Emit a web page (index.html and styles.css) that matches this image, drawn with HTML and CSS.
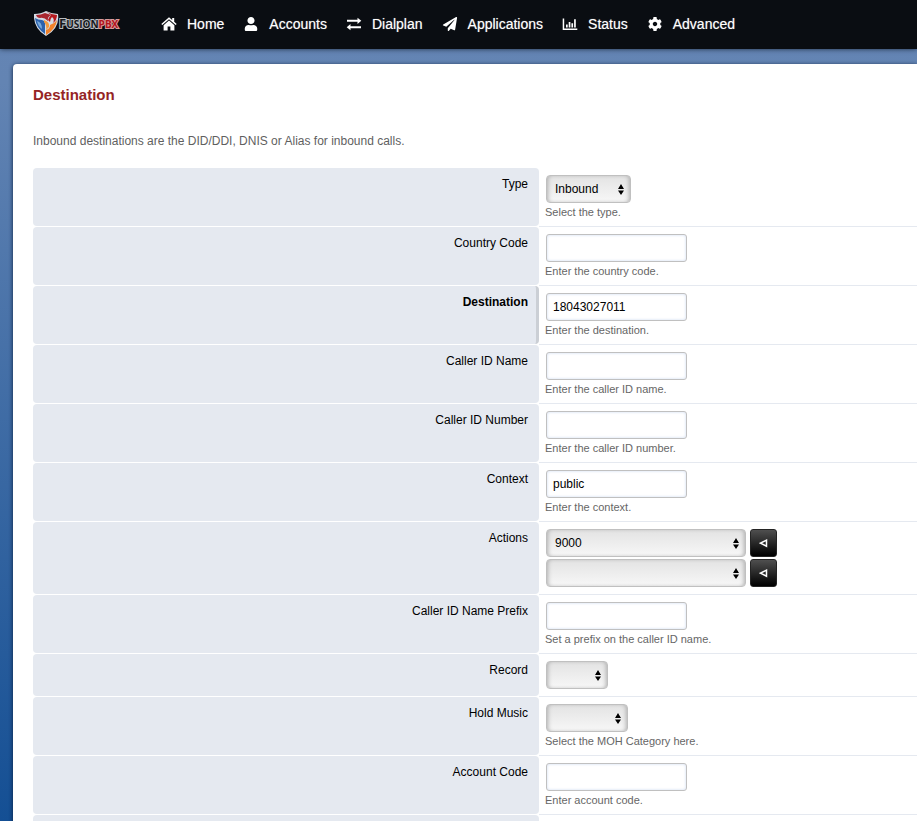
FILE: index.html
```html
<!DOCTYPE html>
<html lang="en">
<head>
    <meta charset="UTF-8">
    <meta name="viewport" content="width=device-width, initial-scale=1.0">
    <title>Destination</title>
    <link rel="stylesheet" href="styles.css">
</head>
<body>
    <header class="navbar">
        <a class="logo" href="#" aria-label="FusionPBX">
            <svg width="96" height="28" viewBox="0 0 96 28">
                <path d="M0 4Q7 4 12 1Q18 4 24 4Q26 18 12 26Q-1 18 0 4z" fill="#d5dbe4"/>
                <path d="M2 5Q7 5 11 3L17 5Q13 7 14 11Q10 7 6 8Q3 8 2 5z" fill="#a9262f"/>
                <path d="M13 2Q18 5 23 5Q23 10 19 13Q21 9 18 7Q16 9 16 12L14 10Q15 7 17 5z" fill="#b5191f"/>
                <path d="M1 8Q4 10 8 10Q12 11 11 17L11 24Q2 18 1 8z" fill="#2b62ad"/>
                <path d="M3 11Q8 12 8 19Q4 16 3 11z" fill="#79a9dc"/>
                <path d="M23 10Q22 19 12 25L12 20Q16 19 16 15Q20 14 23 10z" fill="#f0812a"/>
                <path d="M10 10Q16 12 15 17L12 20Q13 15 10 12z" fill="#f39a3d"/>
                <text class="logo-text" x="25" y="18"><tspan class="logo-cap">F</tspan>USION<tspan class="logo-red">PBX</tspan></text>
            </svg>
        </a>
        <nav class="menu">
            <a href="#">
                <svg class="icon" viewBox="0 0 16 16"><path d="M8 1.2L0.3 8l1 1.1L8 3.3l6.7 5.8 1-1.1-2.5-2.2V2h-2v2z"/><path d="M8 4.6L2.6 9.3V14.5h4V10.5h2.8v4h4V9.3z"/></svg>
                Home
            </a>
            <a href="#">
                <svg class="icon" viewBox="-32 -32 512 576"><path d="M224 256c70.7 0 128-57.3 128-128S294.7 0 224 0 96 57.3 96 128s57.3 128 128 128zm89.6 32h-16.7c-22.2 10.2-46.9 16-72.9 16s-50.6-5.8-72.9-16h-16.7C60.2 288 0 348.2 0 422.4V464c0 26.5 21.5 48 48 48h352c26.5 0 48-21.5 48-48v-41.6c0-74.2-60.2-134.4-134.4-134.4z"/></svg>
                Accounts
            </a>
            <a href="#">
                <svg class="icon" viewBox="0 0 16 16"><path d="M1 3.800h10.500V1.700L15.300 4.800l-3.800 3.100V5.800H1zM15 12.200H4.500v2.100L.7 11.200l3.800-3.100v2.100H15z"/></svg>
                Dialplan
            </a>
            <a href="#">
                <svg class="icon" viewBox="-32 -32 576 576"><path d="M476 3.200L12.500 270.600c-18.100 10.400-15.800 35.600 2.200 43.200L121 358.400l287.300-253.200c5.500-4.900 13.300 2.600 8.600 8.300L176 407v80.500c0 23.600 28.500 32.900 42.500 15.800L282 426l124.600 52.200c14.200 6 30.400-2.900 33-18.200l72-432C515 7.800 493.300-6.800 476 3.200z"/></svg>
                Applications
            </a>
            <a href="#">
                <svg class="icon" viewBox="0 0 16 16"><path d="M.7 2.500h1.500v10H15.300V14H.7zM4 8.500h1.700v3H4zM6.700 6h1.700v5.500H6.700zM9.400 7.200h1.700v4.300H9.400zM12.100 3.200h1.700v8.300h-1.700z"/></svg>
                Status
            </a>
            <a href="#">
                <svg class="icon" viewBox="-32 -32 576 576"><path d="M487.400 315.700l-42.600-24.600c4.300-23.200 4.300-47 0-70.200l42.600-24.600c4.900-2.800 7.100-8.600 5.500-14-11.100-35.600-30-67.800-54.700-94.600-3.800-4.100-10-5.100-14.800-2.300L380.800 110c-17.900-15.400-38.500-27.300-60.800-35.100V25.800c0-5.600-3.900-10.500-9.400-11.700-36.700-8.200-74.300-7.800-109.200 0-5.500 1.200-9.400 6.100-9.400 11.700V75c-22.200 7.900-42.800 19.800-60.800 35.100L88.700 85.500c-4.900-2.800-11-1.900-14.800 2.300-24.700 26.700-43.600 58.900-54.700 94.600-1.700 5.400.6 11.200 5.500 14L67.300 221c-4.300 23.200-4.300 47 0 70.200l-42.600 24.600c-4.900 2.800-7.100 8.600-5.500 14 11.100 35.600 30 67.800 54.700 94.600 3.800 4.100 10 5.100 14.800 2.300l42.600-24.600c17.900 15.400 38.500 27.300 60.800 35.100v49.200c0 5.600 3.900 10.500 9.400 11.700 36.700 8.200 74.300 7.800 109.200 0 5.500-1.200 9.400-6.100 9.400-11.700v-49.200c22.200-7.900 42.800-19.800 60.800-35.100l42.600 24.600c4.900 2.800 11 1.900 14.800-2.300 24.700-26.700 43.600-58.900 54.700-94.600 1.500-5.500-.7-11.300-5.600-14.100zM256 336c-44.100 0-80-35.900-80-80s35.900-80 80-80 80 35.900 80 80-35.900 80-80 80z"/></svg>
                Advanced
            </a>
        </nav>
    </header>

    <main class="content">
        <h1>Destination</h1>
        <p class="intro">Inbound destinations are the DID/DDI, DNIS or Alias for inbound calls.</p>

        <form>
            <div class="row">
                <label for="type">Type</label>
                <div class="field">
                    <select id="type" class="select-type">
                        <option>Inbound</option>
                        <option>Outbound</option>
                    </select>
                    <p class="hint">Select the type.</p>
                </div>
            </div>
            <div class="row">
                <label for="country_code">Country Code</label>
                <div class="field">
                    <input type="text" id="country_code">
                    <p class="hint">Enter the country code.</p>
                </div>
            </div>
            <div class="row required">
                <label for="destination">Destination</label>
                <div class="field">
                    <input type="text" id="destination" value="18043027011">
                    <p class="hint">Enter the destination.</p>
                </div>
            </div>
            <div class="row">
                <label for="cid_name">Caller ID Name</label>
                <div class="field">
                    <input type="text" id="cid_name">
                    <p class="hint">Enter the caller ID name.</p>
                </div>
            </div>
            <div class="row">
                <label for="cid_number">Caller ID Number</label>
                <div class="field">
                    <input type="text" id="cid_number">
                    <p class="hint">Enter the caller ID number.</p>
                </div>
            </div>
            <div class="row">
                <label for="context">Context</label>
                <div class="field">
                    <input type="text" id="context" value="public">
                    <p class="hint">Enter the context.</p>
                </div>
            </div>
            <div class="row">
                <label for="action_1">Actions</label>
                <div class="field">
                    <div class="action">
                        <select id="action_1" class="select-action"><option>9000</option></select>
                        <button type="button" class="btn-back" aria-label="Back"><svg width="9" height="9" viewBox="0 0 9 9"><path d="M7.500 1.200v6L1.500 4.200z"/></svg></button>
                    </div>
                    <div class="action">
                        <select class="select-action" aria-label="Action 2"><option></option></select>
                        <button type="button" class="btn-back" aria-label="Back"><svg width="9" height="9" viewBox="0 0 9 9"><path d="M7.500 1.200v6L1.500 4.200z"/></svg></button>
                    </div>
                </div>
            </div>
            <div class="row">
                <label for="cid_prefix">Caller ID Name Prefix</label>
                <div class="field">
                    <input type="text" id="cid_prefix">
                    <p class="hint">Set a prefix on the caller ID name.</p>
                </div>
            </div>
            <div class="row">
                <label for="record">Record</label>
                <div class="field">
                    <select id="record" class="select-record"><option></option></select>
                </div>
            </div>
            <div class="row">
                <label for="hold_music">Hold Music</label>
                <div class="field">
                    <select id="hold_music" class="select-music"><option></option></select>
                    <p class="hint">Select the MOH Category here.</p>
                </div>
            </div>
            <div class="row">
                <label for="account_code">Account Code</label>
                <div class="field">
                    <input type="text" id="account_code">
                    <p class="hint">Enter account code.</p>
                </div>
            </div>
            <div class="row">
                <div class="label-blank"></div>
            </div>
        </form>
    </main>
</body>
</html>
```
FILE: styles.css
```css
* {
    box-sizing: border-box;
}
body {
    display: flex;
    flex-direction: column;
    height: 100vh;
    margin: 0;
    overflow: hidden;
    font-family: "Liberation Sans", Arial, sans-serif;
    font-size: 12px;
    color: #000;
    background: linear-gradient(#6585b4 0%, #6384b3 10%, #144f94 100%);
}
.navbar {
    display: flex;
    flex: none;
    align-items: center;
    height: 49px;
    padding: 0 0 2px 34px;
    background: #0a0d12;
    box-shadow: 0 0 5px #1d2c40;
}
.logo {
    display: flex;
    width: 127px;
    padding-top: 1px;
}
.logo-text {
    font-family: "Open Sans", sans-serif;
    font-size: 10px;
    font-weight: bold;
    fill: #17191d;
    stroke: #b9bcc0;
    stroke-width: 2px;
    paint-order: stroke;
}
.logo-cap {
    font-size: 13px;
}
.logo-red {
    fill: #b3141b;
    stroke: #d99a9c;
}
.menu {
    display: flex;
    gap: 19px;
}
.menu a {
    display: flex;
    align-items: center;
    gap: 10px;
    font-size: 14px;
    line-height: 16px;
    color: #fff;
    text-decoration: none;
    text-shadow: 0 0 1px rgba(255, 255, 255, 0.5);
}
.icon {
    width: 16px;
    height: 16px;
    fill: #fff;
}
.content {
    flex: none;
    margin: 15px 0 0 13px;
    padding: 20px 0 0 20px;
    background: #fff;
    border-radius: 4px 0 0 4px;
    box-shadow: 0 1px 4px #0a1f3c;
}
h1 {
    margin: 0;
    font-size: 15px;
    line-height: 22px;
    color: #952424;
}
.intro {
    margin: 27px 0 19px;
    font-size: 12px;
    line-height: 16px;
    color: #5f5f5f;
}
.row {
    display: grid;
    grid-template-columns: 506fr 378fr;
    min-height: 43px;
}
.row label,
.label-blank {
    margin-bottom: 1px;
    padding: 8px 11px;
    background: #e5e9f0;
    border-radius: 4px;
    line-height: 16px;
    text-align: right;
}
.row.required label {
    padding-right: 8px;
    border-right: 3px solid #cbcfd5;
    font-weight: bold;
}
.field {
    padding: 6px;
    border-bottom: 1px solid #e5e9f0;
}
input,
select {
    display: block;
    height: 28px;
    margin: 1px;
    font-family: inherit;
    font-size: 12px;
    color: #000;
    border: 1px solid #c0c0c0;
}
input {
    width: 141px;
    padding: 0 6px;
    background: #fff;
    border-radius: 3px;
    box-shadow: inset 0 0 3px #cddaf0;
}
select {
    appearance: none;
    padding: 0 20px 0 8px;
    border-radius: 4px;
    background:
        url("data:image/svg+xml,%3Csvg xmlns='http://www.w3.org/2000/svg' width='6' height='11'%3E%3Cpath d='M3 0L6 5H0zM0 6.500h6L3 11z'/%3E%3C/svg%3E") no-repeat right 6px center,
        linear-gradient(#e3e3e3, #f7f7f7);
    box-shadow: inset 3px 0 4px -2px #b0b0b0, inset -3px 0 4px -2px #b0b0b0;
}
.select-type {
    width: 85px;
}
.select-action {
    width: 200px;
}
.select-record {
    width: 62px;
}
.select-music {
    width: 82px;
}
.hint {
    margin: 0;
    font-size: 11px;
    line-height: 16px;
    color: #666;
}
.action {
    display: flex;
    align-items: center;
    gap: 3px;
}
.btn-back {
    display: flex;
    align-items: center;
    justify-content: center;
    width: 27px;
    height: 28px;
    padding: 0;
    border: 1px solid #242424;
    border-radius: 3px;
    background: linear-gradient(#4f4f4f, #000);
}
.btn-back svg {
    fill: none;
    stroke: #fff;
    stroke-width: 1.5;
}
```
